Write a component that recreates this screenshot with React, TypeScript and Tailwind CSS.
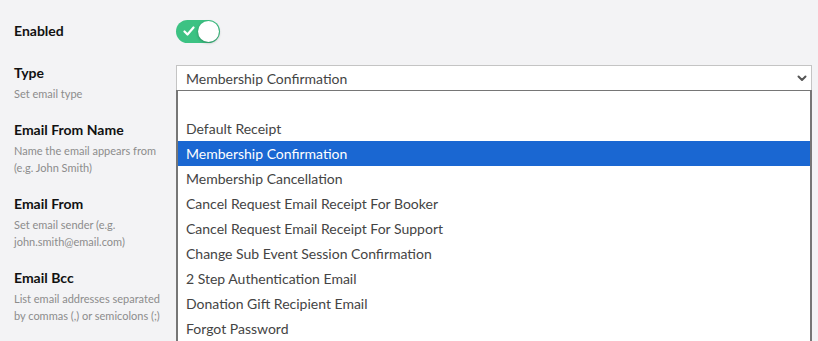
import React from 'react';

const OPTIONS = [
  '',
  'Default Receipt',
  'Membership Confirmation',
  'Membership Cancellation',
  'Cancel Request Email Receipt For Booker',
  'Cancel Request Email Receipt For Support',
  'Change Sub Event Session Confirmation',
  '2 Step Authentication Email',
  'Donation Gift Recipient Email',
  'Forgot Password',
];

const SELECTED = 'Membership Confirmation';

function FieldLabel({ title, desc }: { title: string; desc?: string[] }) {
  return (
    <div className="w-[162px] shrink-0">
      <div className="text-[14px] font-bold leading-5 text-[#111]">{title}</div>
      {desc && (
        <div className="mt-[2px] text-[11px] leading-[17px] text-[#8c8c8c]">
          {desc.map((line) => (
            <div key={line}>{line}</div>
          ))}
        </div>
      )}
    </div>
  );
}

function Toggle() {
  return (
    <div className="relative h-[23px] w-[44px] rounded-full bg-[#3cc283]">
      <svg className="absolute left-[7px] top-[6px]" width="12" height="11" viewBox="0 0 12 11" fill="none">
        <path d="M1.5 5.5 L4.5 8.5 L10.5 1.5" stroke="white" strokeWidth="2.2" strokeLinecap="round" strokeLinejoin="round" />
      </svg>
      <div className="absolute right-[1px] top-[1px] h-[21px] w-[21px] rounded-full bg-white shadow-[0_1px_3px_rgba(0,0,0,0.3)]" />
    </div>
  );
}

export default function App() {
  return (
    <div className="h-[341px] w-[818px] overflow-hidden bg-[#f3f3f5] pl-[14px] pt-[18px] font-['Lato',sans-serif]">
      {/* Enabled */}
      <div className="flex h-[26px] items-center">
        <FieldLabel title="Enabled" />
        <Toggle />
      </div>

      {/* Type + open dropdown */}
      <div className="mt-[19px] flex">
        <FieldLabel title="Type" desc={['Set email type']} />
        <div className="relative mt-[2px] w-[636px]">
          <div className="flex h-[27px] items-center justify-between border border-[#c4c4c4] bg-white pl-[9px] pr-[4px] text-[14px] text-[#444]">
            <span>{SELECTED}</span>
            <svg width="10" height="7" viewBox="0 0 10 7" fill="none">
              <path d="M1.5 1.5 L5 5 L8.5 1.5" stroke="#555" strokeWidth="2" strokeLinecap="round" strokeLinejoin="round" />
            </svg>
          </div>
          <ul className="absolute left-0 top-[25px] z-10 w-[636px] border-x-2 border-t border-[#767676] bg-white">
            {OPTIONS.map((opt, i) => (
              <li
                key={i}
                className={`flex h-[25px] items-center pl-[8px] text-[14px] ${
                  opt === SELECTED ? 'bg-[#1a67d2] text-white' : 'text-[#444]'
                }`}
              >
                {opt}
              </li>
            ))}
            <li className="h-[25px]" />
          </ul>
        </div>
      </div>

      <div className="mt-[18px] flex flex-col gap-[18px]">
        <FieldLabel title="Email From Name" desc={['Name the email appears from', '(e.g. John Smith)']} />
        <FieldLabel title="Email From" desc={['Set email sender (e.g.', 'john.smith@email.com)']} />
        <FieldLabel title="Email Bcc" desc={['List email addresses separated', 'by commas (,) or semicolons (;)']} />
      </div>
    </div>
  );
}
